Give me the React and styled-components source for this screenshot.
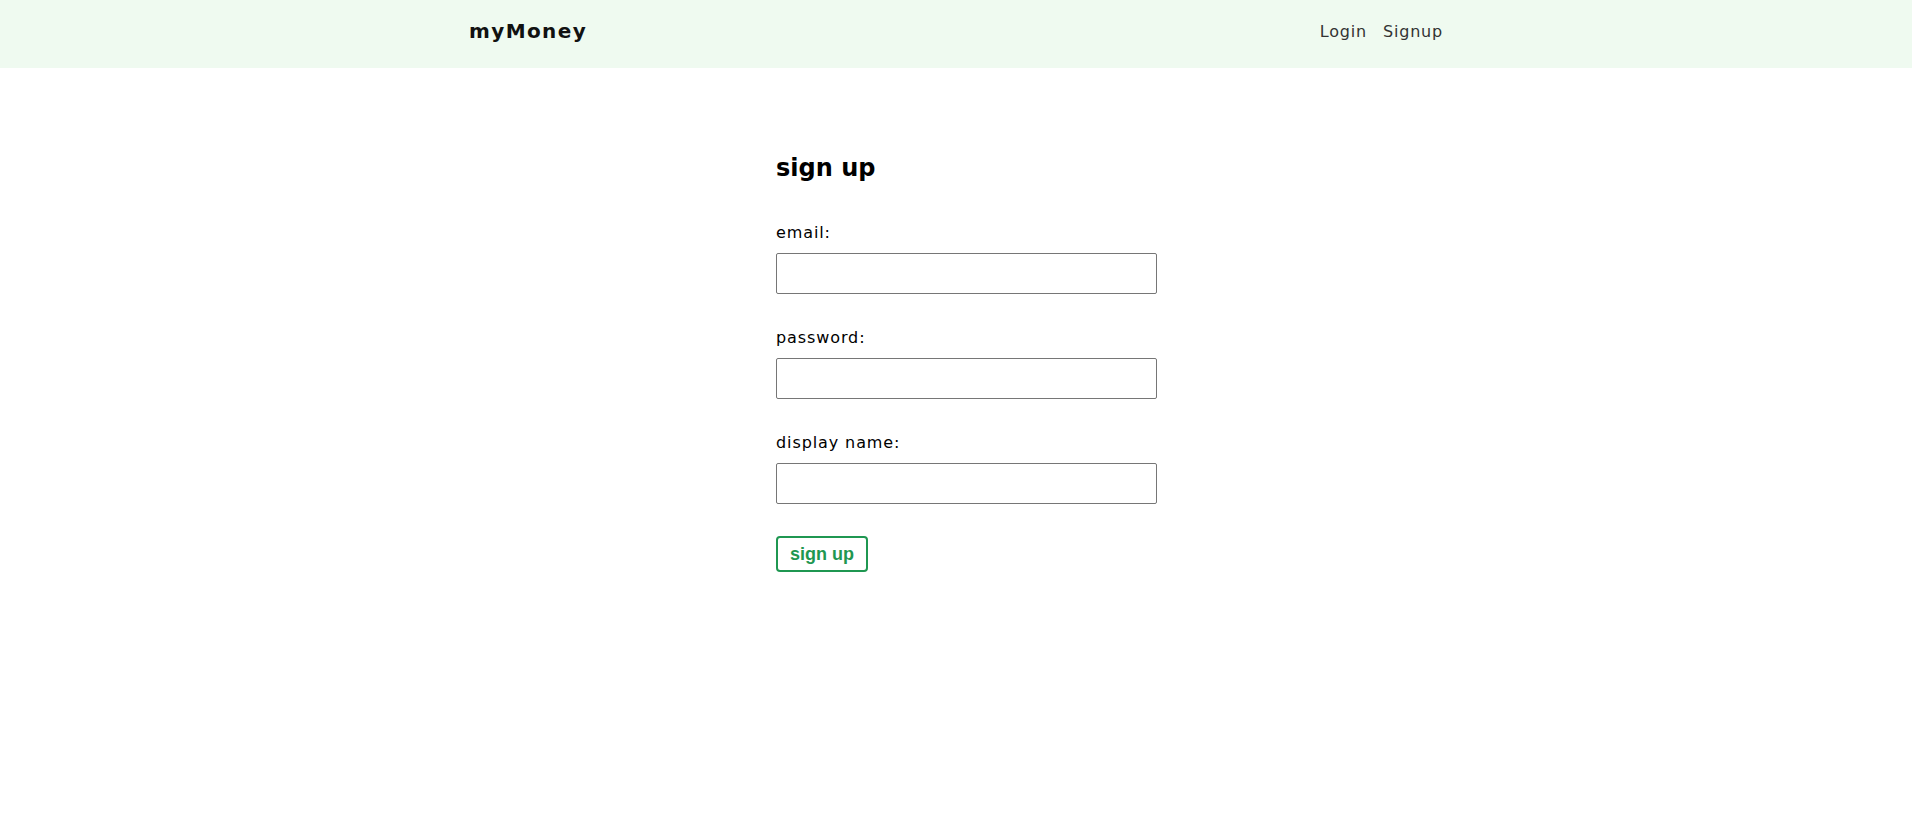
import React from 'react'
import styled, { createGlobalStyle } from 'styled-components'

const GlobalStyle = createGlobalStyle`
  body {
    margin: 0;
    font-family: "DejaVu Sans", "Noto Sans", sans-serif;
    color: #000;
    background: #fff;
  }
`

const Navbar = () => (
  <Nav>
    <NavInner>
      <Title>myMoney</Title>
      <NavLink href="#">Login</NavLink>
      <NavLink href="#">Signup</NavLink>
    </NavInner>
  </Nav>
)

const Field = ({ label, type }) => (
  <Label>
    <LabelText>{label}</LabelText>
    <Input type={type} />
  </Label>
)

const App = () => {
  return (
    <>
      <GlobalStyle />
      <Navbar />
      <Form onSubmit={e => e.preventDefault()}>
        <Heading>sign up</Heading>
        <Field label="email:" type="email" />
        <Field label="password:" type="password" />
        <Field label="display name:" type="text" />
        <Button>sign up</Button>
      </Form>
    </>
  )
}

export default App

const Nav = styled.nav`
  height: 68px;
  background: #effaf0;
  display: flex;
  align-items: center;
`

const NavInner = styled.div`
  width: 974px;
  margin: 0 auto;
  padding-bottom: 6px;
  display: flex;
  align-items: center;
`

const Title = styled.div`
  margin-right: auto;
  font-weight: 700;
  font-size: 20px;
  letter-spacing: 1.4px;
  color: #111;
`

const NavLink = styled.a`
  margin-left: 16px;
  color: #333;
  text-decoration: none;
  font-size: 16px;
  letter-spacing: 0.8px;
`

const Form = styled.form`
  width: 360px;
  margin: 0 auto;
  padding-top: 84px;
`

const Heading = styled.h2`
  margin: 0;
  font-size: 24px;
  line-height: 32px;
  font-weight: 700;
`

const Label = styled.label`
  display: block;
  margin-top: 32px;
  &:first-of-type {
    margin-top: 37px;
  }
`

const LabelText = styled.span`
  display: block;
  font-size: 16px;
  line-height: 24px;
  letter-spacing: 0.9px;
  margin-bottom: 8px;
`

const Input = styled.input`
  display: block;
  box-sizing: border-box;
  width: 381px;
  height: 41px;
  padding: 8px 6px;
  font-size: 16px;
  color: #777;
  border: 1px solid #767676;
  border-radius: 2px;
`

const Button = styled.button`
  margin-top: 32px;
  height: 36px;
  padding: 0 12px;
  background: #fff;
  border: 2px solid #1f9751;
  border-radius: 4px;
  color: #1f9751;
  font-family: "Liberation Sans", Arial, sans-serif;
  font-weight: 700;
  font-size: 18px;
  cursor: pointer;
`
